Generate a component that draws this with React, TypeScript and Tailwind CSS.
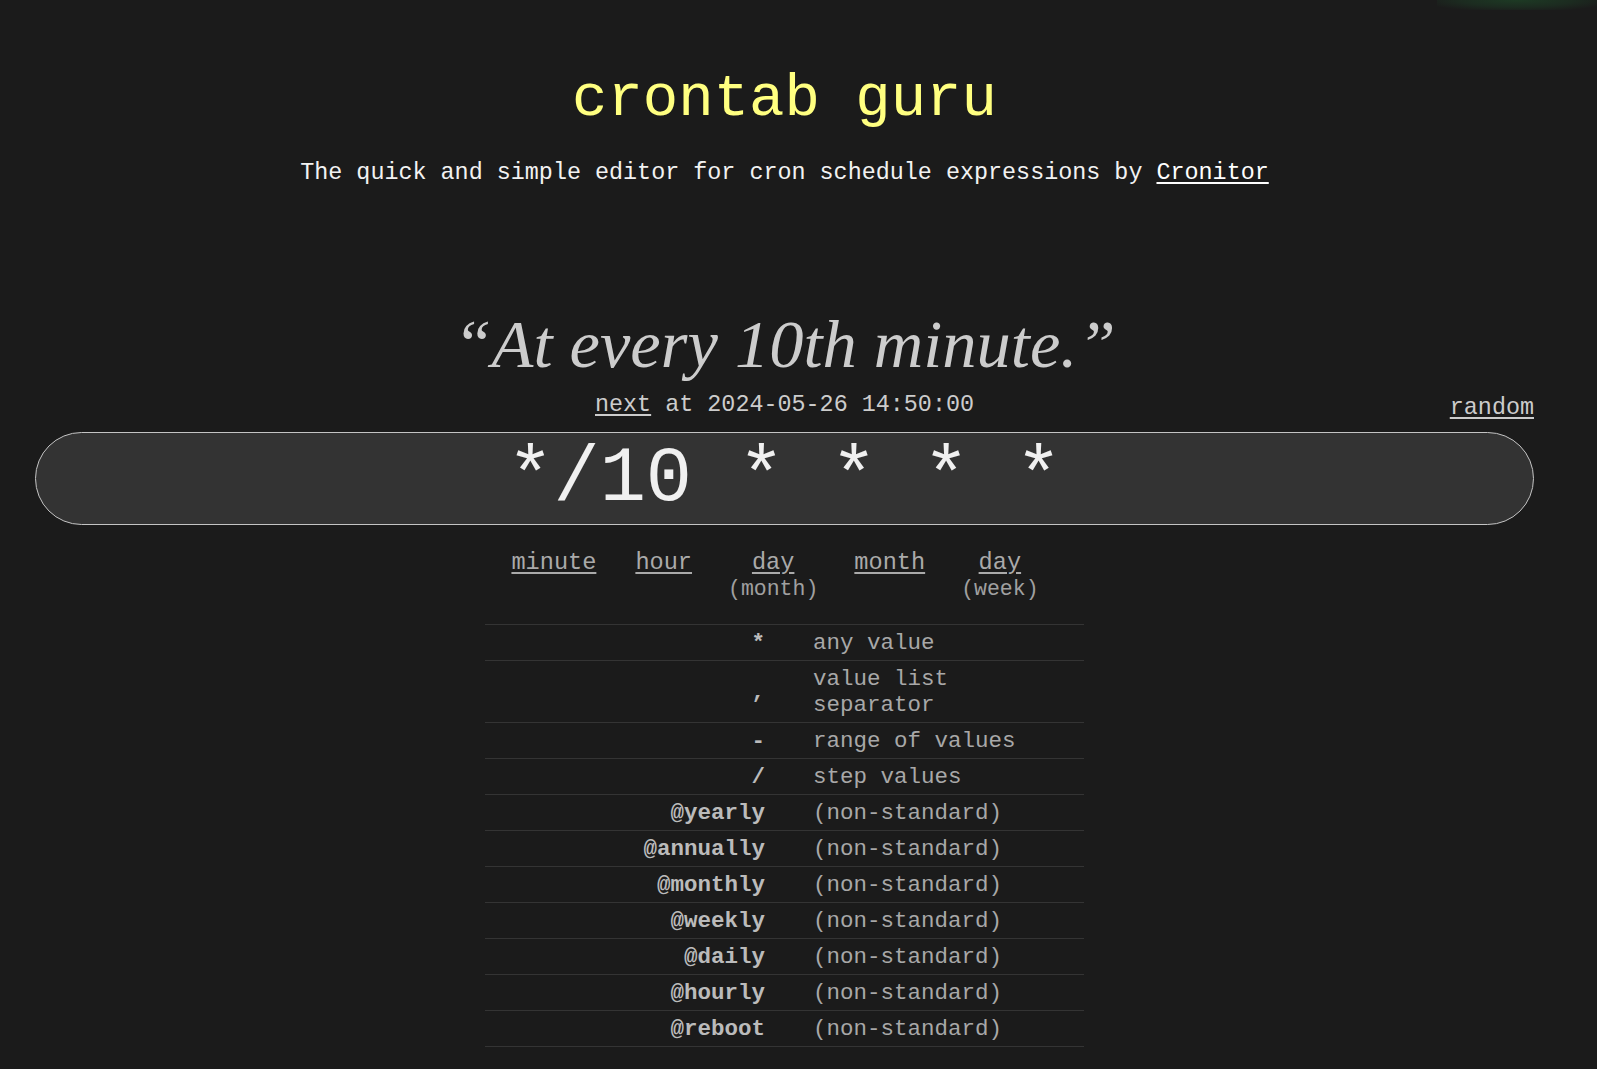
import React from "react";

const mono = { fontFamily: '"Liberation Mono", "DejaVu Sans Mono", monospace' };

const rows: { sym: string; desc: string }[] = [
	{ sym: "*", desc: "any value" },
	{ sym: ",", desc: "value list separator" },
	{ sym: "-", desc: "range of values" },
	{ sym: "/", desc: "step values" },
	{ sym: "@yearly", desc: "(non-standard)" },
	{ sym: "@annually", desc: "(non-standard)" },
	{ sym: "@monthly", desc: "(non-standard)" },
	{ sym: "@weekly", desc: "(non-standard)" },
	{ sym: "@daily", desc: "(non-standard)" },
	{ sym: "@hourly", desc: "(non-standard)" },
	{ sym: "@reboot", desc: "(non-standard)" },
];

const parts: { label: string; sub?: string }[] = [
	{ label: "minute" },
	{ label: "hour" },
	{ label: "day", sub: "(month)" },
	{ label: "month" },
	{ label: "day", sub: "(week)" },
];

function FieldLabels() {
	return (
		<div className="flex justify-center gap-[36px] pr-[19px] mt-[25px]">
			{parts.map((p, i) => (
				<div key={i} className={`flex flex-col items-center ${i === 0 ? "mr-[3px]" : ""}`}>
					<span className="text-[23.6px] leading-[26px] text-[#aaaaaa] underline underline-offset-[3px]">
						{p.label}
					</span>
					{p.sub && (
						<span className="text-[21.5px] leading-[26px] text-[#a0a0a0]">
							{p.sub}
						</span>
					)}
				</div>
			))}
		</div>
	);
}

function Legend() {
	return (
		<div className="w-[599px] mx-auto mt-[22px] border-t border-[#343434]">
			{rows.map((r) => (
				<div
					key={r.sym}
					className="grid grid-cols-[304px_1fr] border-b border-[#343434] text-[22.5px] leading-[26px] py-[4.5px]"
				>
					<div className="flex items-center justify-end pr-[24px] font-bold text-[#bbbbbb]">
						{r.sym}
					</div>
					<div className="pl-[24px] pr-[12px] text-[#a8a8a8]">{r.desc}</div>
				</div>
			))}
		</div>
	);
}

export default function App() {
	return (
		<div className="relative min-h-screen w-full bg-[#1b1b1b] overflow-hidden" style={mono}>
			<div className="absolute top-0 right-0 w-[160px] h-[10px] bg-[radial-gradient(ellipse_at_top,#1d3a24_0%,#1c2b20_50%,transparent_85%)]" />
			<div className="w-[1569px] px-[35px] pb-[40px]">
				<h1 className="mt-[70px] text-center text-[59px] leading-[59px] font-normal text-[#ffff80]">
					crontab guru
				</h1>
				<p className="mt-[30px] text-center text-[23.4px] leading-[28px] text-[#f2f2f2]">
					The quick and simple editor for cron schedule expressions by{" "}
					<a className="underline underline-offset-[3px] text-white">Cronitor</a>
				</p>

				<div
					className="mt-[117px] text-center text-[68.5px] leading-[80px] italic text-[#cccccc]"
					style={{ fontFamily: '"Liberation Serif", "DejaVu Serif", serif' }}
				>
					“At every 10th minute.”
				</div>

				<div className="mt-[6px] grid grid-cols-[1fr_auto_1fr] text-[23.4px] leading-[28px] text-[#cccccc]">
					<div />
					<div className="pt-[1px]">
						<a className="underline underline-offset-[3px]">next</a> at 2024-05-26 14:50:00
					</div>
					<div className="justify-self-end pt-[4px]">
						<a className="underline underline-offset-[3px]">random</a>
					</div>
				</div>

				<div className="mt-[10px] h-[93px] rounded-full border border-[#c4c4c4] bg-[#333333] flex items-center justify-center">
					<span className="text-[77px] leading-none text-[#f0f0f0] mt-[2px]">*/10 * * * *</span>
				</div>

				<FieldLabels />
				<Legend />
			</div>
		</div>
	);
}
